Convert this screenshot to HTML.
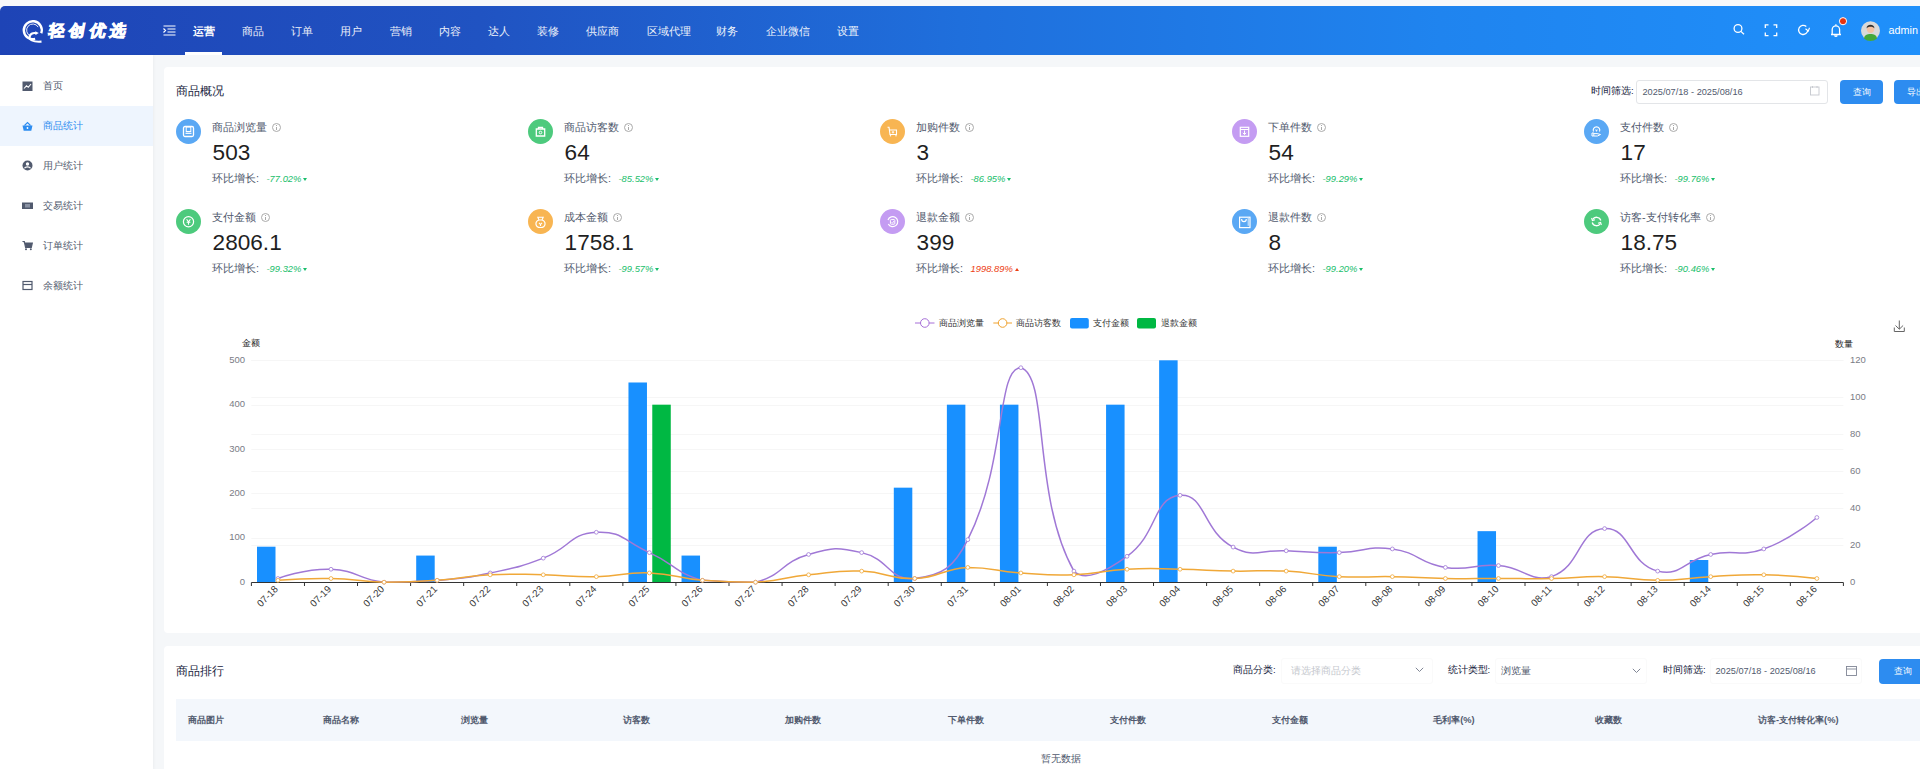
<!DOCTYPE html>
<html><head><meta charset="utf-8">
<style>
*{box-sizing:border-box;margin:0;padding:0}
html,body{width:1920px;height:769px;overflow:hidden}
body{position:relative;background:#f5f7f9;font-family:"Liberation Sans",sans-serif;color:#515a6e;font-size:10.8px}
.abs{position:absolute;white-space:nowrap}
#topstrip{position:absolute;left:0;top:0;width:1920px;height:6px;background:#f7f8fa}
#hdr{position:absolute;left:0;top:6px;width:1920px;height:48.5px;border-top-left-radius:5px;
 background:linear-gradient(90deg,#1e44b6 0%,#2053c2 25%,#1f6fdc 50%,#1f84ef 75%,#1f90fb 100%)}
.nav{position:absolute;top:25px;color:#fff;font-size:10.8px;line-height:13px;opacity:.92}
.nav.on{font-weight:bold;opacity:1}
#sidebar{position:absolute;left:0;top:54.5px;width:153px;height:715px;background:#fff;box-shadow:1px 0 3px rgba(0,0,0,.04)}
.mi{position:absolute;left:0;width:153px;height:39.5px;font-size:10px;color:#515a6e}
.mi span{position:absolute;left:42.5px;top:13px;line-height:13px}
.mi.on{background:#eef5fe;color:#2d8cf0}
.mi svg{position:absolute;left:22px;top:14.5px}
.card{position:absolute;background:#fff;border-radius:4px}
.ttl{position:absolute;font-size:12.1px;color:#17233d;line-height:15px}
.ic{position:absolute;width:25px;height:25px;border-radius:50%}
.ic svg{position:absolute;left:0;top:0}
.lbl{position:absolute;font-size:10.8px;color:#515a6e;line-height:13px}
.lbl i{display:inline-block;width:9px;height:9px;border:1px solid #aaa;border-radius:50%;margin-left:5px;vertical-align:-1px;position:relative}
.lbl i:after{content:"";position:absolute;left:3px;top:3px;width:1px;height:3px;background:#aaa}
.lbl i:before{content:"";position:absolute;left:3px;top:1.2px;width:1px;height:1px;background:#aaa}
.num{position:absolute;font-size:22.6px;color:#1f1f1f;line-height:26px}
.hb{position:absolute;font-size:10.8px;color:#515a6e;line-height:13px}
.hb em{font-size:9.4px;color:#19be6b;font-style:italic;margin-left:7.5px}
.hb em.r{color:#ed4014}
.tri{display:inline-block;width:0;height:0;border-left:2.8px solid transparent;border-right:2.8px solid transparent;border-top:3.3px solid #19be6b;margin-left:2px;vertical-align:1.5px}
.tri.up{border-top:0;border-bottom:3.3px solid #ed4014}
.al{font-family:"Liberation Sans",sans-serif;font-size:9.5px;fill:#7a7c85}
.xl{font-family:"Liberation Sans",sans-serif;font-size:9.8px;fill:#333}
.an{font-family:"Liberation Sans",sans-serif;font-size:9px;fill:#222}
.lg{font-family:"Liberation Sans",sans-serif;font-size:9px;fill:#333}
.btn{position:absolute;background:#2d8cf0;border-radius:4px;color:#fff;font-size:9.3px;text-align:center}
.inp{position:absolute;border:1px solid #e3e5e8;border-radius:3px;background:#fff}
.th{position:absolute;top:713.5px;font-size:9.3px;font-weight:bold;color:#515a6e;line-height:13px}
</style></head><body>
<div id="topstrip"></div>
<div id="hdr"></div>
<!-- logo -->
<svg class="abs" style="left:15px;top:12px" width="35" height="36" viewBox="15 12 35 36">
 <path d="M41.26 33.28 A9 9 0 1 0 35.13 38.89" fill="none" stroke="#fff" stroke-width="2.4"/>
 <path d="M30.68 36.03 A6.2 6.2 0 1 1 38.17 27.1" fill="none" stroke="#fff" stroke-width="0.9"/>
 <path d="M36.5 33.3 C33 32.3 29.3 34 29.6 37.5 C30 41 35 42 41.5 41.6" fill="none" stroke="#fff" stroke-width="2.1"/>
 <path d="M35.3 31.2 L38.8 33 L35.5 35 Z" fill="#fff"/>
</svg>
<div class="abs" style="left:46.5px;top:21px;color:#fff;font-size:16px;font-weight:900;line-height:20px;letter-spacing:4.5px;-webkit-text-stroke:0.9px #fff;transform:skewX(-10deg);transform-origin:0 100%">轻创优选</div>
<!-- menu icon -->
<svg class="abs" style="left:163px;top:24.5px" width="13" height="11" viewBox="0 0 13 11"><path d="M0.5 1 H12.5 M4.5 4 H12.5 M4.5 7 H12.5 M0.5 10 H12.5 M0.5 3.5 L2.5 5.5 L0.5 7.5" stroke="#fff" stroke-width="1.2" fill="none"/></svg>
<div class="nav on" style="left:192.5px">运营</div>
<div class="abs" style="left:185px;top:52px;width:37px;height:2.5px;background:#fff"></div>
<div class="nav" style="left:242.2px">商品</div>
<div class="nav" style="left:291px">订单</div>
<div class="nav" style="left:340.2px">用户</div>
<div class="nav" style="left:389.8px">营销</div>
<div class="nav" style="left:439.3px">内容</div>
<div class="nav" style="left:487.8px">达人</div>
<div class="nav" style="left:537px">装修</div>
<div class="nav" style="left:585.9px">供应商</div>
<div class="nav" style="left:646.5px">区域代理</div>
<div class="nav" style="left:716.3px">财务</div>
<div class="nav" style="left:766px">企业微信</div>
<div class="nav" style="left:837.2px">设置</div>
<!-- header right icons -->
<svg class="abs" style="left:1730px;top:14px" width="190" height="28" viewBox="1730 14 190 28">
 <g fill="none" stroke="#fff" stroke-width="1.3">
  <circle cx="1738" cy="28.5" r="3.9"/><path d="M1740.9 31.4 L1744 34.3"/>
  <path d="M1765.3 28 V24.9 H1768.5 M1773.5 24.9 H1776.7 V28 M1776.7 32.5 V35.6 H1773.5 M1768.5 35.6 H1765.3 V32.5"/>
  <path d="M1807.8 30 A4.6 4.6 0 1 1 1806.3 26.5"/><path d="M1805.5 28.8 L1808.3 31 L1809.5 27.8" stroke-width="1.1"/>
  <path d="M1831 34.5 H1841 M1832.2 34.3 V29.5 A3.6 3.6 0 0 1 1839.6 29.5 V34.3 M1835.9 25.5 V24.3 M1834.6 35.5 A1.4 1.4 0 0 0 1837.2 35.5"/>
 </g>
 <circle cx="1843" cy="21.2" r="3.6" fill="#e8340f" stroke="#fff" stroke-width="1"/>
 <circle cx="1870.5" cy="30.8" r="9.5" fill="#d9d9d9"/>
 <path d="M1864 38.5 C1864.5 35 1867 34 1870.5 34 C1874 34 1876.5 35 1877 38.5 A9.4 9.4 0 0 1 1864 38.5 Z" fill="#45a83a"/>
 <circle cx="1870.5" cy="29.3" r="3.6" fill="#f4c2a2"/>
 <path d="M1866.6 28.5 C1866.2 23.5 1874.8 23.5 1874.4 28.5 C1873.5 26.3 1867.5 26.3 1866.6 28.5 Z" fill="#2f2f2f"/>
</svg>
<div class="abs" style="left:1888.5px;top:24.2px;color:#fff;font-size:10.8px;line-height:13px">admin</div>

<!-- sidebar -->
<div id="sidebar">
 <div class="mi" style="top:11.5px"><svg width="11" height="11" viewBox="0 0 11 11"><rect x="0.5" y="0.5" width="10" height="9.5" fill="#515a6e"/><path d="M2 7.5 L4.5 4.8 L6.3 6.3 L9 3" stroke="#fff" stroke-width="1.1" fill="none"/></svg><span>首页</span></div>
 <div class="mi on" style="top:51.5px"><svg width="11" height="11" viewBox="0 0 11 11"><path d="M0.5 4.5 H10.5 L9.3 9.8 H1.7 Z" fill="#2d8cf0"/><path d="M2.5 4.5 L5.5 1.5 L8.5 4.5" stroke="#2d8cf0" stroke-width="1.1" fill="none"/><circle cx="5.5" cy="7" r="0.9" fill="#fff"/></svg><span>商品统计</span></div>
 <div class="mi" style="top:91px"><svg width="11" height="11" viewBox="0 0 11 11"><circle cx="5.5" cy="5.5" r="5" fill="#515a6e"/><circle cx="5.5" cy="4" r="1.7" fill="#fff"/><path d="M2.5 8.3 C3.5 6.3 7.5 6.3 8.5 8.3" stroke="#fff" stroke-width="1.2" fill="none"/></svg><span>用户统计</span></div>
 <div class="mi" style="top:131px"><svg width="11" height="11" viewBox="0 0 11 11"><rect x="0" y="2.5" width="11" height="6.5" fill="#515a6e"/><rect x="3" y="4" width="5" height="3.5" fill="#8a92a3"/></svg><span>交易统计</span></div>
 <div class="mi" style="top:171px"><svg width="11" height="11" viewBox="0 0 11 11"><path d="M0.5 1.5 H2.3 L3.6 7.3 H9.3 L10.3 3 H2.8" stroke="#515a6e" stroke-width="1.2" fill="#515a6e"/><circle cx="4" cy="9.3" r="1" fill="#515a6e"/><circle cx="8.8" cy="9.3" r="1" fill="#515a6e"/></svg><span>订单统计</span></div>
 <div class="mi" style="top:211px"><svg width="11" height="11" viewBox="0 0 11 11"><rect x="1" y="1.5" width="9" height="8" fill="none" stroke="#515a6e" stroke-width="1.2"/><path d="M1 4.5 H10" stroke="#515a6e" stroke-width="1.2"/></svg><span>余额统计</span></div>
</div>

<!-- card 1 -->
<div class="card" style="left:163.8px;top:66.8px;width:1780px;height:566.2px"></div>
<div class="ttl" style="left:176px;top:84px">商品概况</div>
<div class="abs" style="left:1591px;top:85px;font-size:9.5px;color:#17233d;line-height:12px">时间筛选:</div>
<div class="inp" style="left:1636px;top:79.5px;width:192px;height:24px"></div>
<div class="abs" style="left:1642.5px;top:86px;font-size:9.2px;color:#515a6e;line-height:12px">2025/07/18 - 2025/08/16</div>
<svg class="abs" style="left:1810px;top:86px" width="10" height="10" viewBox="0 0 10 10"><rect x="0.5" y="1" width="8.5" height="8" fill="none" stroke="#c5c8ce" stroke-width="0.9"/><path d="M2.5 0 V2 M7 0 V2" stroke="#c5c8ce" stroke-width="0.9"/></svg>
<div class="btn" style="left:1840px;top:79.5px;width:43px;height:24px;line-height:24px">查询</div>
<div class="btn" style="left:1894px;top:79.5px;width:43px;height:24px;line-height:24px">导出</div>

<!-- stats -->
<div class="ic" style="left:176.0px;top:119.0px;background:#5aa8f4"><svg width="25" height="25" viewBox="0 0 25 25"><rect x="7.5" y="7.5" width="10" height="10" rx="1.5" fill="none" stroke="#fff" stroke-width="1.3"/><rect x="10.2" y="8" width="4.6" height="4.5" fill="none" stroke="#fff" stroke-width="1"/><path d="M9.5 14.3 H15.5" stroke="#fff" stroke-width="1.2"/></svg></div>
<div class="lbl" style="left:212.0px;top:121.0px">商品浏览量<i></i></div>
<div class="num" style="left:212.6px;top:139.6px">503</div>
<div class="hb" style="left:212.0px;top:172.0px">环比增长:<em>-77.02%</em><span class="tri"></span></div>
<div class="ic" style="left:528.0px;top:119.0px;background:#4dca7d"><svg width="25" height="25" viewBox="0 0 25 25"><path d="M8.3 10 H16.7 V17 H8.3 Z" fill="none" stroke="#fff" stroke-width="1.3"/><path d="M10.5 10 V8.5 H14.5 V10" fill="none" stroke="#fff" stroke-width="1.3"/><circle cx="12.5" cy="13.5" r="1.3" fill="none" stroke="#fff" stroke-width="1"/></svg></div>
<div class="lbl" style="left:564.0px;top:121.0px">商品访客数<i></i></div>
<div class="num" style="left:564.6px;top:139.6px">64</div>
<div class="hb" style="left:564.0px;top:172.0px">环比增长:<em>-85.52%</em><span class="tri"></span></div>
<div class="ic" style="left:880.0px;top:119.0px;background:#f8b552"><svg width="25" height="25" viewBox="0 0 25 25"><path d="M7.5 8.2 H9 L10 15.5 H16.5 V11 H9.5" fill="none" stroke="#fff" stroke-width="1.1"/><path d="M13 12 V14.5 M11.8 13.2 H14.2" stroke="#fff" stroke-width="0.9"/><circle cx="10.5" cy="16.8" r="0.7" fill="#fff"/><circle cx="16" cy="16.8" r="0.7" fill="#fff"/></svg></div>
<div class="lbl" style="left:916.0px;top:121.0px">加购件数<i></i></div>
<div class="num" style="left:916.6px;top:139.6px">3</div>
<div class="hb" style="left:916.0px;top:172.0px">环比增长:<em>-86.95%</em><span class="tri"></span></div>
<div class="ic" style="left:1232.0px;top:119.0px;background:#c49cf2"><svg width="25" height="25" viewBox="0 0 25 25"><rect x="8.3" y="8.3" width="8.4" height="9" fill="none" stroke="#fff" stroke-width="1.2"/><path d="M8.3 10.5 H16.7 M12.5 11.5 V15.5 M10.8 13.8 L12.5 15.5 L14.2 13.8" fill="none" stroke="#fff" stroke-width="1"/></svg></div>
<div class="lbl" style="left:1268.0px;top:121.0px">下单件数<i></i></div>
<div class="num" style="left:1268.6px;top:139.6px">54</div>
<div class="hb" style="left:1268.0px;top:172.0px">环比增长:<em>-99.29%</em><span class="tri"></span></div>
<div class="ic" style="left:1584.0px;top:119.0px;background:#5aa8f4"><svg width="25" height="25" viewBox="0 0 25 25"><path d="M9.5 12.5 A3.3 3.3 0 1 1 15.5 12.5" fill="none" stroke="#fff" stroke-width="1.1"/><path d="M11.8 10.5 L12.5 12.3 L13.2 10.5" stroke="#fff" stroke-width="1" fill="none"/><path d="M8 14 H9.8 V17 H8 Z M9.8 14.6 H13 L16.5 15.5 L13.5 17 H9.8" fill="none" stroke="#fff" stroke-width="1"/></svg></div>
<div class="lbl" style="left:1620.0px;top:121.0px">支付件数<i></i></div>
<div class="num" style="left:1620.6px;top:139.6px">17</div>
<div class="hb" style="left:1620.0px;top:172.0px">环比增长:<em>-99.76%</em><span class="tri"></span></div>
<div class="ic" style="left:176.0px;top:209.0px;background:#4dca7d"><svg width="25" height="25" viewBox="0 0 25 25"><circle cx="12.5" cy="12.8" r="5.1" fill="none" stroke="#fff" stroke-width="1.2"/><path d="M10.6 10.2 L12.5 12.8 L14.4 10.2 M12.5 12.8 V15.8 M10.6 13.3 H14.4" fill="none" stroke="#fff" stroke-width="1.1"/></svg></div>
<div class="lbl" style="left:212.0px;top:211.0px">支付金额<i></i></div>
<div class="num" style="left:212.6px;top:229.6px">2806.1</div>
<div class="hb" style="left:212.0px;top:262.0px">环比增长:<em>-99.32%</em><span class="tri"></span></div>
<div class="ic" style="left:528.0px;top:209.0px;background:#f8b552"><svg width="25" height="25" viewBox="0 0 25 25"><path d="M9.8 8.2 H15.2 L14 11 H11 Z" fill="none" stroke="#fff" stroke-width="1.1"/><path d="M11 11 C6.5 12.5 7 18.5 12.5 18.5 C18 18.5 18.5 12.5 14 11" fill="none" stroke="#fff" stroke-width="1.2"/><path d="M11 13.8 L12.5 15.5 L14 13.8 M12.5 15.5 V17" fill="none" stroke="#fff" stroke-width="1.1"/></svg></div>
<div class="lbl" style="left:564.0px;top:211.0px">成本金额<i></i></div>
<div class="num" style="left:564.6px;top:229.6px">1758.1</div>
<div class="hb" style="left:564.0px;top:262.0px">环比增长:<em>-99.57%</em><span class="tri"></span></div>
<div class="ic" style="left:880.0px;top:209.0px;background:#c49cf2"><svg width="25" height="25" viewBox="0 0 25 25"><path d="M8 11 A5 5 0 1 1 8.3 15" fill="none" stroke="#fff" stroke-width="1.2"/><rect x="10.4" y="10.6" width="4.4" height="4.6" rx="0.8" fill="none" stroke="#fff" stroke-width="1"/><path d="M11.5 13.2 L12.5 14.2 L13.8 12" fill="none" stroke="#fff" stroke-width="0.8"/></svg></div>
<div class="lbl" style="left:916.0px;top:211.0px">退款金额<i></i></div>
<div class="num" style="left:916.6px;top:229.6px">399</div>
<div class="hb" style="left:916.0px;top:262.0px">环比增长:<em class="r">1998.89%</em><span class="tri up"></span></div>
<div class="ic" style="left:1232.0px;top:209.0px;background:#5aa8f4"><svg width="25" height="25" viewBox="0 0 25 25"><rect x="7.6" y="8.2" width="10.4" height="10.4" fill="none" stroke="#fff" stroke-width="1.2"/><path d="M9.6 10 C9.6 13.5 14.3 13.5 14.3 10" fill="none" stroke="#fff" stroke-width="1.1"/><path d="M16.2 9 V16.8" stroke="#fff" stroke-width="0.8"/></svg></div>
<div class="lbl" style="left:1268.0px;top:211.0px">退款件数<i></i></div>
<div class="num" style="left:1268.6px;top:229.6px">8</div>
<div class="hb" style="left:1268.0px;top:262.0px">环比增长:<em>-99.20%</em><span class="tri"></span></div>
<div class="ic" style="left:1584.0px;top:209.0px;background:#4dca7d"><svg width="25" height="25" viewBox="0 0 25 25"><path d="M16.8 11.5 A4.5 4.5 0 0 0 8.6 10.5 M8.2 13.5 A4.5 4.5 0 0 0 16.4 14.5" fill="none" stroke="#fff" stroke-width="1.3"/><path d="M7.6 9 L8.4 11.6 L11 10.8 M17.4 16 L16.6 13.4 L14 14.2" fill="none" stroke="#fff" stroke-width="1.1"/></svg></div>
<div class="lbl" style="left:1620.0px;top:211.0px">访客-支付转化率<i></i></div>
<div class="num" style="left:1620.6px;top:229.6px">18.75</div>
<div class="hb" style="left:1620.0px;top:262.0px">环比增长:<em>-90.46%</em><span class="tri"></span></div>

<svg width="1920" height="769" style="position:absolute;left:0;top:0">
<line x1="251.4" y1="538.5" x2="1843.4" y2="538.5" stroke="#f6f6f6" stroke-width="1"/>
<line x1="251.4" y1="493.5" x2="1843.4" y2="493.5" stroke="#f6f6f6" stroke-width="1"/>
<line x1="251.4" y1="449.5" x2="1843.4" y2="449.5" stroke="#f6f6f6" stroke-width="1"/>
<line x1="251.4" y1="405.5" x2="1843.4" y2="405.5" stroke="#f6f6f6" stroke-width="1"/>
<line x1="251.4" y1="360.5" x2="1843.4" y2="360.5" stroke="#f6f6f6" stroke-width="1"/>
<line x1="251.4" y1="545.5" x2="1843.4" y2="545.5" stroke="#f6f6f6" stroke-width="1"/>
<line x1="251.4" y1="508.5" x2="1843.4" y2="508.5" stroke="#f6f6f6" stroke-width="1"/>
<line x1="251.4" y1="471.5" x2="1843.4" y2="471.5" stroke="#f6f6f6" stroke-width="1"/>
<line x1="251.4" y1="434.5" x2="1843.4" y2="434.5" stroke="#f6f6f6" stroke-width="1"/>
<line x1="251.4" y1="397.5" x2="1843.4" y2="397.5" stroke="#f6f6f6" stroke-width="1"/>
<line x1="251.4" y1="360.5" x2="1843.4" y2="360.5" stroke="#f6f6f6" stroke-width="1"/>
<rect x="257.00" y="546.70" width="18.50" height="35.50" fill="#1890ff"/>
<rect x="416.20" y="555.57" width="18.50" height="26.63" fill="#1890ff"/>
<rect x="628.47" y="382.49" width="18.50" height="199.71" fill="#1890ff"/>
<rect x="681.53" y="555.57" width="18.50" height="26.63" fill="#1890ff"/>
<rect x="893.80" y="487.67" width="18.50" height="94.53" fill="#1890ff"/>
<rect x="946.87" y="404.68" width="18.50" height="177.52" fill="#1890ff"/>
<rect x="999.93" y="404.68" width="18.50" height="177.52" fill="#1890ff"/>
<rect x="1106.07" y="404.68" width="18.50" height="177.52" fill="#1890ff"/>
<rect x="1159.13" y="360.30" width="18.50" height="221.90" fill="#1890ff"/>
<rect x="1318.33" y="546.70" width="18.50" height="35.50" fill="#1890ff"/>
<rect x="1477.53" y="531.16" width="18.50" height="51.04" fill="#1890ff"/>
<rect x="1689.80" y="560.01" width="18.50" height="22.19" fill="#1890ff"/>
<rect x="652.27" y="404.68" width="18.50" height="177.52" fill="#00b843"/>
<line x1="251.4" y1="582.5" x2="1843.4" y2="582.5" stroke="#333" stroke-width="1"/>
<line x1="251.40" y1="582.5" x2="251.40" y2="586.0" stroke="#333" stroke-width="1"/>
<line x1="304.47" y1="582.5" x2="304.47" y2="586.0" stroke="#333" stroke-width="1"/>
<line x1="357.53" y1="582.5" x2="357.53" y2="586.0" stroke="#333" stroke-width="1"/>
<line x1="410.60" y1="582.5" x2="410.60" y2="586.0" stroke="#333" stroke-width="1"/>
<line x1="463.67" y1="582.5" x2="463.67" y2="586.0" stroke="#333" stroke-width="1"/>
<line x1="516.73" y1="582.5" x2="516.73" y2="586.0" stroke="#333" stroke-width="1"/>
<line x1="569.80" y1="582.5" x2="569.80" y2="586.0" stroke="#333" stroke-width="1"/>
<line x1="622.87" y1="582.5" x2="622.87" y2="586.0" stroke="#333" stroke-width="1"/>
<line x1="675.93" y1="582.5" x2="675.93" y2="586.0" stroke="#333" stroke-width="1"/>
<line x1="729.00" y1="582.5" x2="729.00" y2="586.0" stroke="#333" stroke-width="1"/>
<line x1="782.07" y1="582.5" x2="782.07" y2="586.0" stroke="#333" stroke-width="1"/>
<line x1="835.13" y1="582.5" x2="835.13" y2="586.0" stroke="#333" stroke-width="1"/>
<line x1="888.20" y1="582.5" x2="888.20" y2="586.0" stroke="#333" stroke-width="1"/>
<line x1="941.27" y1="582.5" x2="941.27" y2="586.0" stroke="#333" stroke-width="1"/>
<line x1="994.33" y1="582.5" x2="994.33" y2="586.0" stroke="#333" stroke-width="1"/>
<line x1="1047.40" y1="582.5" x2="1047.40" y2="586.0" stroke="#333" stroke-width="1"/>
<line x1="1100.47" y1="582.5" x2="1100.47" y2="586.0" stroke="#333" stroke-width="1"/>
<line x1="1153.53" y1="582.5" x2="1153.53" y2="586.0" stroke="#333" stroke-width="1"/>
<line x1="1206.60" y1="582.5" x2="1206.60" y2="586.0" stroke="#333" stroke-width="1"/>
<line x1="1259.67" y1="582.5" x2="1259.67" y2="586.0" stroke="#333" stroke-width="1"/>
<line x1="1312.73" y1="582.5" x2="1312.73" y2="586.0" stroke="#333" stroke-width="1"/>
<line x1="1365.80" y1="582.5" x2="1365.80" y2="586.0" stroke="#333" stroke-width="1"/>
<line x1="1418.87" y1="582.5" x2="1418.87" y2="586.0" stroke="#333" stroke-width="1"/>
<line x1="1471.93" y1="582.5" x2="1471.93" y2="586.0" stroke="#333" stroke-width="1"/>
<line x1="1525.00" y1="582.5" x2="1525.00" y2="586.0" stroke="#333" stroke-width="1"/>
<line x1="1578.07" y1="582.5" x2="1578.07" y2="586.0" stroke="#333" stroke-width="1"/>
<line x1="1631.13" y1="582.5" x2="1631.13" y2="586.0" stroke="#333" stroke-width="1"/>
<line x1="1684.20" y1="582.5" x2="1684.20" y2="586.0" stroke="#333" stroke-width="1"/>
<line x1="1737.27" y1="582.5" x2="1737.27" y2="586.0" stroke="#333" stroke-width="1"/>
<line x1="1790.33" y1="582.5" x2="1790.33" y2="586.0" stroke="#333" stroke-width="1"/>
<line x1="1843.40" y1="582.5" x2="1843.40" y2="586.0" stroke="#333" stroke-width="1"/>
<path d="M277.93 578.50 C277.93 578.50 304.65 568.34 331.00 569.26 C357.72 570.19 357.16 579.39 384.07 582.20 C410.22 582.20 410.72 582.20 437.13 580.35 C463.79 578.03 464.04 578.42 490.20 572.95 C517.10 567.33 517.65 567.98 543.27 558.16 C570.72 547.64 569.29 533.69 596.33 532.27 C622.36 530.91 623.56 540.91 649.40 552.61 C676.63 564.95 674.34 572.51 702.47 580.35 C727.41 582.20 730.59 582.20 755.53 582.20 C783.66 575.34 780.47 562.30 808.60 554.46 C833.54 547.51 836.54 546.92 861.67 552.61 C889.61 558.94 889.63 581.56 914.73 578.50 C942.69 575.09 953.60 567.87 967.80 539.67 C1006.67 462.47 996.39 367.70 1020.87 367.70 C1049.46 376.16 1031.89 496.38 1073.93 571.11 C1084.95 582.20 1105.50 571.67 1127.00 556.31 C1158.56 533.76 1152.38 497.70 1180.07 495.29 C1205.45 493.08 1202.24 530.92 1233.13 547.07 C1255.30 558.65 1259.64 549.38 1286.20 550.76 C1312.71 552.15 1312.76 553.08 1339.27 552.61 C1365.82 552.15 1366.53 545.32 1392.33 548.92 C1419.59 552.71 1418.11 563.13 1445.40 567.41 C1471.18 571.45 1472.21 563.27 1498.47 565.56 C1525.28 567.89 1528.67 582.20 1551.53 576.65 C1581.73 566.13 1577.38 530.00 1604.60 528.57 C1630.45 527.22 1628.47 563.98 1657.67 571.11 C1681.54 576.93 1683.65 560.13 1710.73 554.46 C1736.72 549.03 1739.19 557.49 1763.80 548.92 C1792.25 539.00 1816.87 517.48 1816.87 517.48" fill="none" stroke="#a078d6" stroke-width="1.5"/>
<path d="M277.93 580.35 C277.93 580.35 304.49 578.04 331.00 578.50 C357.56 578.96 357.51 581.74 384.07 582.20 C410.58 582.20 410.66 582.20 437.13 580.35 C463.73 578.50 463.59 576.19 490.20 574.80 C516.66 573.42 516.74 574.34 543.27 574.80 C569.81 575.27 569.82 577.11 596.33 576.65 C622.89 576.19 622.96 572.03 649.40 572.95 C676.03 573.88 675.81 578.03 702.47 580.35 C728.88 582.20 729.12 582.20 755.53 582.20 C782.19 580.81 781.97 577.59 808.60 574.80 C835.04 572.04 835.23 570.18 861.67 571.11 C888.30 572.03 888.36 579.42 914.73 578.50 C941.42 577.57 941.05 568.80 967.80 567.41 C994.12 567.41 994.27 571.10 1020.87 572.95 C1047.34 574.80 1047.46 575.73 1073.93 574.80 C1100.53 573.88 1100.39 570.65 1127.00 569.26 C1153.46 567.87 1153.54 568.79 1180.07 569.26 C1206.61 569.72 1206.59 570.64 1233.13 571.11 C1259.66 571.57 1259.74 569.72 1286.20 571.11 C1312.81 572.50 1312.66 575.26 1339.27 576.65 C1365.73 578.04 1365.81 576.19 1392.33 576.65 C1418.87 577.11 1418.86 578.04 1445.40 578.50 C1471.93 578.96 1471.93 578.50 1498.47 578.50 C1525.00 578.50 1525.01 578.96 1551.53 578.50 C1578.07 578.04 1578.09 576.19 1604.60 576.65 C1631.16 577.12 1631.13 580.35 1657.67 580.35 C1684.20 580.35 1684.18 578.04 1710.73 576.65 C1737.24 575.27 1737.29 574.34 1763.80 574.80 C1790.36 575.27 1816.87 578.50 1816.87 578.50" fill="none" stroke="#f0a838" stroke-width="1.5"/>
<circle cx="277.93" cy="578.50" r="1.9" fill="#fff" stroke="#a078d6" stroke-width="0.8"/>
<circle cx="331.00" cy="569.26" r="1.9" fill="#fff" stroke="#a078d6" stroke-width="0.8"/>
<circle cx="384.07" cy="582.20" r="1.9" fill="#fff" stroke="#a078d6" stroke-width="0.8"/>
<circle cx="437.13" cy="580.35" r="1.9" fill="#fff" stroke="#a078d6" stroke-width="0.8"/>
<circle cx="490.20" cy="572.95" r="1.9" fill="#fff" stroke="#a078d6" stroke-width="0.8"/>
<circle cx="543.27" cy="558.16" r="1.9" fill="#fff" stroke="#a078d6" stroke-width="0.8"/>
<circle cx="596.33" cy="532.27" r="1.9" fill="#fff" stroke="#a078d6" stroke-width="0.8"/>
<circle cx="649.40" cy="552.61" r="1.9" fill="#fff" stroke="#a078d6" stroke-width="0.8"/>
<circle cx="702.47" cy="580.35" r="1.9" fill="#fff" stroke="#a078d6" stroke-width="0.8"/>
<circle cx="755.53" cy="582.20" r="1.9" fill="#fff" stroke="#a078d6" stroke-width="0.8"/>
<circle cx="808.60" cy="554.46" r="1.9" fill="#fff" stroke="#a078d6" stroke-width="0.8"/>
<circle cx="861.67" cy="552.61" r="1.9" fill="#fff" stroke="#a078d6" stroke-width="0.8"/>
<circle cx="914.73" cy="578.50" r="1.9" fill="#fff" stroke="#a078d6" stroke-width="0.8"/>
<circle cx="967.80" cy="539.67" r="1.9" fill="#fff" stroke="#a078d6" stroke-width="0.8"/>
<circle cx="1020.87" cy="367.70" r="1.9" fill="#fff" stroke="#a078d6" stroke-width="0.8"/>
<circle cx="1073.93" cy="571.11" r="1.9" fill="#fff" stroke="#a078d6" stroke-width="0.8"/>
<circle cx="1127.00" cy="556.31" r="1.9" fill="#fff" stroke="#a078d6" stroke-width="0.8"/>
<circle cx="1180.07" cy="495.29" r="1.9" fill="#fff" stroke="#a078d6" stroke-width="0.8"/>
<circle cx="1233.13" cy="547.07" r="1.9" fill="#fff" stroke="#a078d6" stroke-width="0.8"/>
<circle cx="1286.20" cy="550.76" r="1.9" fill="#fff" stroke="#a078d6" stroke-width="0.8"/>
<circle cx="1339.27" cy="552.61" r="1.9" fill="#fff" stroke="#a078d6" stroke-width="0.8"/>
<circle cx="1392.33" cy="548.92" r="1.9" fill="#fff" stroke="#a078d6" stroke-width="0.8"/>
<circle cx="1445.40" cy="567.41" r="1.9" fill="#fff" stroke="#a078d6" stroke-width="0.8"/>
<circle cx="1498.47" cy="565.56" r="1.9" fill="#fff" stroke="#a078d6" stroke-width="0.8"/>
<circle cx="1551.53" cy="576.65" r="1.9" fill="#fff" stroke="#a078d6" stroke-width="0.8"/>
<circle cx="1604.60" cy="528.57" r="1.9" fill="#fff" stroke="#a078d6" stroke-width="0.8"/>
<circle cx="1657.67" cy="571.11" r="1.9" fill="#fff" stroke="#a078d6" stroke-width="0.8"/>
<circle cx="1710.73" cy="554.46" r="1.9" fill="#fff" stroke="#a078d6" stroke-width="0.8"/>
<circle cx="1763.80" cy="548.92" r="1.9" fill="#fff" stroke="#a078d6" stroke-width="0.8"/>
<circle cx="1816.87" cy="517.48" r="1.9" fill="#fff" stroke="#a078d6" stroke-width="0.8"/>
<circle cx="277.93" cy="580.35" r="1.9" fill="#fff" stroke="#f0a838" stroke-width="0.8"/>
<circle cx="331.00" cy="578.50" r="1.9" fill="#fff" stroke="#f0a838" stroke-width="0.8"/>
<circle cx="384.07" cy="582.20" r="1.9" fill="#fff" stroke="#f0a838" stroke-width="0.8"/>
<circle cx="437.13" cy="580.35" r="1.9" fill="#fff" stroke="#f0a838" stroke-width="0.8"/>
<circle cx="490.20" cy="574.80" r="1.9" fill="#fff" stroke="#f0a838" stroke-width="0.8"/>
<circle cx="543.27" cy="574.80" r="1.9" fill="#fff" stroke="#f0a838" stroke-width="0.8"/>
<circle cx="596.33" cy="576.65" r="1.9" fill="#fff" stroke="#f0a838" stroke-width="0.8"/>
<circle cx="649.40" cy="572.95" r="1.9" fill="#fff" stroke="#f0a838" stroke-width="0.8"/>
<circle cx="702.47" cy="580.35" r="1.9" fill="#fff" stroke="#f0a838" stroke-width="0.8"/>
<circle cx="755.53" cy="582.20" r="1.9" fill="#fff" stroke="#f0a838" stroke-width="0.8"/>
<circle cx="808.60" cy="574.80" r="1.9" fill="#fff" stroke="#f0a838" stroke-width="0.8"/>
<circle cx="861.67" cy="571.11" r="1.9" fill="#fff" stroke="#f0a838" stroke-width="0.8"/>
<circle cx="914.73" cy="578.50" r="1.9" fill="#fff" stroke="#f0a838" stroke-width="0.8"/>
<circle cx="967.80" cy="567.41" r="1.9" fill="#fff" stroke="#f0a838" stroke-width="0.8"/>
<circle cx="1020.87" cy="572.95" r="1.9" fill="#fff" stroke="#f0a838" stroke-width="0.8"/>
<circle cx="1073.93" cy="574.80" r="1.9" fill="#fff" stroke="#f0a838" stroke-width="0.8"/>
<circle cx="1127.00" cy="569.26" r="1.9" fill="#fff" stroke="#f0a838" stroke-width="0.8"/>
<circle cx="1180.07" cy="569.26" r="1.9" fill="#fff" stroke="#f0a838" stroke-width="0.8"/>
<circle cx="1233.13" cy="571.11" r="1.9" fill="#fff" stroke="#f0a838" stroke-width="0.8"/>
<circle cx="1286.20" cy="571.11" r="1.9" fill="#fff" stroke="#f0a838" stroke-width="0.8"/>
<circle cx="1339.27" cy="576.65" r="1.9" fill="#fff" stroke="#f0a838" stroke-width="0.8"/>
<circle cx="1392.33" cy="576.65" r="1.9" fill="#fff" stroke="#f0a838" stroke-width="0.8"/>
<circle cx="1445.40" cy="578.50" r="1.9" fill="#fff" stroke="#f0a838" stroke-width="0.8"/>
<circle cx="1498.47" cy="578.50" r="1.9" fill="#fff" stroke="#f0a838" stroke-width="0.8"/>
<circle cx="1551.53" cy="578.50" r="1.9" fill="#fff" stroke="#f0a838" stroke-width="0.8"/>
<circle cx="1604.60" cy="576.65" r="1.9" fill="#fff" stroke="#f0a838" stroke-width="0.8"/>
<circle cx="1657.67" cy="580.35" r="1.9" fill="#fff" stroke="#f0a838" stroke-width="0.8"/>
<circle cx="1710.73" cy="576.65" r="1.9" fill="#fff" stroke="#f0a838" stroke-width="0.8"/>
<circle cx="1763.80" cy="574.80" r="1.9" fill="#fff" stroke="#f0a838" stroke-width="0.8"/>
<circle cx="1816.87" cy="578.50" r="1.9" fill="#fff" stroke="#f0a838" stroke-width="0.8"/>
<text x="245" y="584.6" text-anchor="end" class="al">0</text>
<text x="245" y="540.2" text-anchor="end" class="al">100</text>
<text x="245" y="495.8" text-anchor="end" class="al">200</text>
<text x="245" y="451.5" text-anchor="end" class="al">300</text>
<text x="245" y="407.1" text-anchor="end" class="al">400</text>
<text x="245" y="362.7" text-anchor="end" class="al">500</text>
<text x="1850" y="584.6" class="al">0</text>
<text x="1850" y="547.6" class="al">20</text>
<text x="1850" y="510.6" class="al">40</text>
<text x="1850" y="473.6" class="al">60</text>
<text x="1850" y="436.7" class="al">80</text>
<text x="1850" y="399.7" class="al">100</text>
<text x="1850" y="362.7" class="al">120</text>
<text transform="translate(278.73 589.70) rotate(-45)" text-anchor="end" class="xl">07-18</text>
<text transform="translate(331.80 589.70) rotate(-45)" text-anchor="end" class="xl">07-19</text>
<text transform="translate(384.87 589.70) rotate(-45)" text-anchor="end" class="xl">07-20</text>
<text transform="translate(437.93 589.70) rotate(-45)" text-anchor="end" class="xl">07-21</text>
<text transform="translate(491.00 589.70) rotate(-45)" text-anchor="end" class="xl">07-22</text>
<text transform="translate(544.07 589.70) rotate(-45)" text-anchor="end" class="xl">07-23</text>
<text transform="translate(597.13 589.70) rotate(-45)" text-anchor="end" class="xl">07-24</text>
<text transform="translate(650.20 589.70) rotate(-45)" text-anchor="end" class="xl">07-25</text>
<text transform="translate(703.27 589.70) rotate(-45)" text-anchor="end" class="xl">07-26</text>
<text transform="translate(756.33 589.70) rotate(-45)" text-anchor="end" class="xl">07-27</text>
<text transform="translate(809.40 589.70) rotate(-45)" text-anchor="end" class="xl">07-28</text>
<text transform="translate(862.47 589.70) rotate(-45)" text-anchor="end" class="xl">07-29</text>
<text transform="translate(915.53 589.70) rotate(-45)" text-anchor="end" class="xl">07-30</text>
<text transform="translate(968.60 589.70) rotate(-45)" text-anchor="end" class="xl">07-31</text>
<text transform="translate(1021.67 589.70) rotate(-45)" text-anchor="end" class="xl">08-01</text>
<text transform="translate(1074.73 589.70) rotate(-45)" text-anchor="end" class="xl">08-02</text>
<text transform="translate(1127.80 589.70) rotate(-45)" text-anchor="end" class="xl">08-03</text>
<text transform="translate(1180.87 589.70) rotate(-45)" text-anchor="end" class="xl">08-04</text>
<text transform="translate(1233.93 589.70) rotate(-45)" text-anchor="end" class="xl">08-05</text>
<text transform="translate(1287.00 589.70) rotate(-45)" text-anchor="end" class="xl">08-06</text>
<text transform="translate(1340.07 589.70) rotate(-45)" text-anchor="end" class="xl">08-07</text>
<text transform="translate(1393.13 589.70) rotate(-45)" text-anchor="end" class="xl">08-08</text>
<text transform="translate(1446.20 589.70) rotate(-45)" text-anchor="end" class="xl">08-09</text>
<text transform="translate(1499.27 589.70) rotate(-45)" text-anchor="end" class="xl">08-10</text>
<text transform="translate(1552.33 589.70) rotate(-45)" text-anchor="end" class="xl">08-11</text>
<text transform="translate(1605.40 589.70) rotate(-45)" text-anchor="end" class="xl">08-12</text>
<text transform="translate(1658.47 589.70) rotate(-45)" text-anchor="end" class="xl">08-13</text>
<text transform="translate(1711.53 589.70) rotate(-45)" text-anchor="end" class="xl">08-14</text>
<text transform="translate(1764.60 589.70) rotate(-45)" text-anchor="end" class="xl">08-15</text>
<text transform="translate(1817.67 589.70) rotate(-45)" text-anchor="end" class="xl">08-16</text>
<text x="242" y="346.2" class="an">金额</text>
<text x="1835" y="346.5" class="an">数量</text>
<line x1="915" y1="323" x2="934.5" y2="323" stroke="#a66fd8" stroke-width="1"/><circle cx="924.8" cy="323" r="4.3" fill="#fff" stroke="#a66fd8" stroke-width="1"/>
<text x="939" y="326.3" class="lg">商品浏览量</text>
<line x1="993.3" y1="323" x2="1012" y2="323" stroke="#f0a22e" stroke-width="1"/><circle cx="1002.6" cy="323" r="4.3" fill="#fff" stroke="#f0a22e" stroke-width="1"/>
<text x="1016" y="326.3" class="lg">商品访客数</text>
<rect x="1070" y="318" width="18.8" height="10.4" rx="2" fill="#1890ff"/>
<text x="1093.3" y="326.3" class="lg">支付金额</text>
<rect x="1137" y="318" width="19" height="10.4" rx="2" fill="#00b843"/>
<text x="1161" y="326.3" class="lg">退款金额</text>
<g stroke="#666" stroke-width="1" fill="none"><path d="M1899.3 320.5 V329 M1895.5 325.5 L1899.3 329.2 L1903.1 325.5 M1894.3 327.5 V331.5 H1904.3 V327.5"/></g>
</svg>

<!-- card 2 -->
<div class="card" style="left:163.8px;top:645.5px;width:1780px;height:200px"></div>
<div class="ttl" style="left:176px;top:663.5px">商品排行</div>
<div class="abs" style="left:1233px;top:664px;font-size:9.5px;color:#17233d;line-height:12px">商品分类:</div>
<div class="inp" style="left:1280.5px;top:658px;width:152px;height:25.5px;border-color:#fafafa"></div>
<div class="abs" style="left:1291px;top:664.5px;font-size:9.5px;color:#c5c8ce;line-height:12px">请选择商品分类</div>
<svg class="abs" style="left:1415px;top:667px" width="9" height="6" viewBox="0 0 9 6"><path d="M0.8 0.8 L4.5 4.5 L8.2 0.8" stroke="#808695" stroke-width="1" fill="none"/></svg>
<div class="abs" style="left:1447.5px;top:664px;font-size:9.5px;color:#17233d;line-height:12px">统计类型:</div>
<div class="inp" style="left:1495px;top:658px;width:152px;height:25.5px;border-color:#fafafa"></div>
<div class="abs" style="left:1501px;top:664.5px;font-size:9.5px;color:#515a6e;line-height:12px">浏览量</div>
<svg class="abs" style="left:1631.5px;top:668px" width="9" height="6" viewBox="0 0 9 6"><path d="M0.8 0.8 L4.5 4.5 L8.2 0.8" stroke="#808695" stroke-width="1" fill="none"/></svg>
<div class="abs" style="left:1663px;top:664px;font-size:9.5px;color:#17233d;line-height:12px">时间筛选:</div>
<div class="inp" style="left:1710px;top:658px;width:152px;height:25.5px;border-color:#fafafa"></div>
<div class="abs" style="left:1715.5px;top:664.5px;font-size:9.2px;color:#515a6e;line-height:12px">2025/07/18 - 2025/08/16</div>
<svg class="abs" style="left:1845.5px;top:665.5px" width="11" height="10" viewBox="0 0 11 10"><rect x="0.5" y="0.5" width="10" height="9" fill="none" stroke="#808695" stroke-width="0.9"/><path d="M0.5 3 H10.5" stroke="#808695" stroke-width="0.9"/></svg>
<div class="btn" style="left:1878.5px;top:659px;width:48px;height:24.5px;line-height:24.5px">查询</div>
<div class="abs" style="left:176px;top:699px;width:1760px;height:41.5px;background:#f3f7fc"></div>
<div class="th" style="left:188.3px">商品图片</div>
<div class="th" style="left:323.3px">商品名称</div>
<div class="th" style="left:461.4px">浏览量</div>
<div class="th" style="left:623.3px">访客数</div>
<div class="th" style="left:785.4px">加购件数</div>
<div class="th" style="left:948px">下单件数</div>
<div class="th" style="left:1109.6px">支付件数</div>
<div class="th" style="left:1271.7px">支付金额</div>
<div class="th" style="left:1433.2px">毛利率(%)</div>
<div class="th" style="left:1595.3px">收藏数</div>
<div class="th" style="left:1758px">访客-支付转化率(%)</div>
<div class="abs" style="left:1041.3px;top:753px;font-size:9.5px;color:#515a6e;line-height:12px">暂无数据</div>
</body></html>
